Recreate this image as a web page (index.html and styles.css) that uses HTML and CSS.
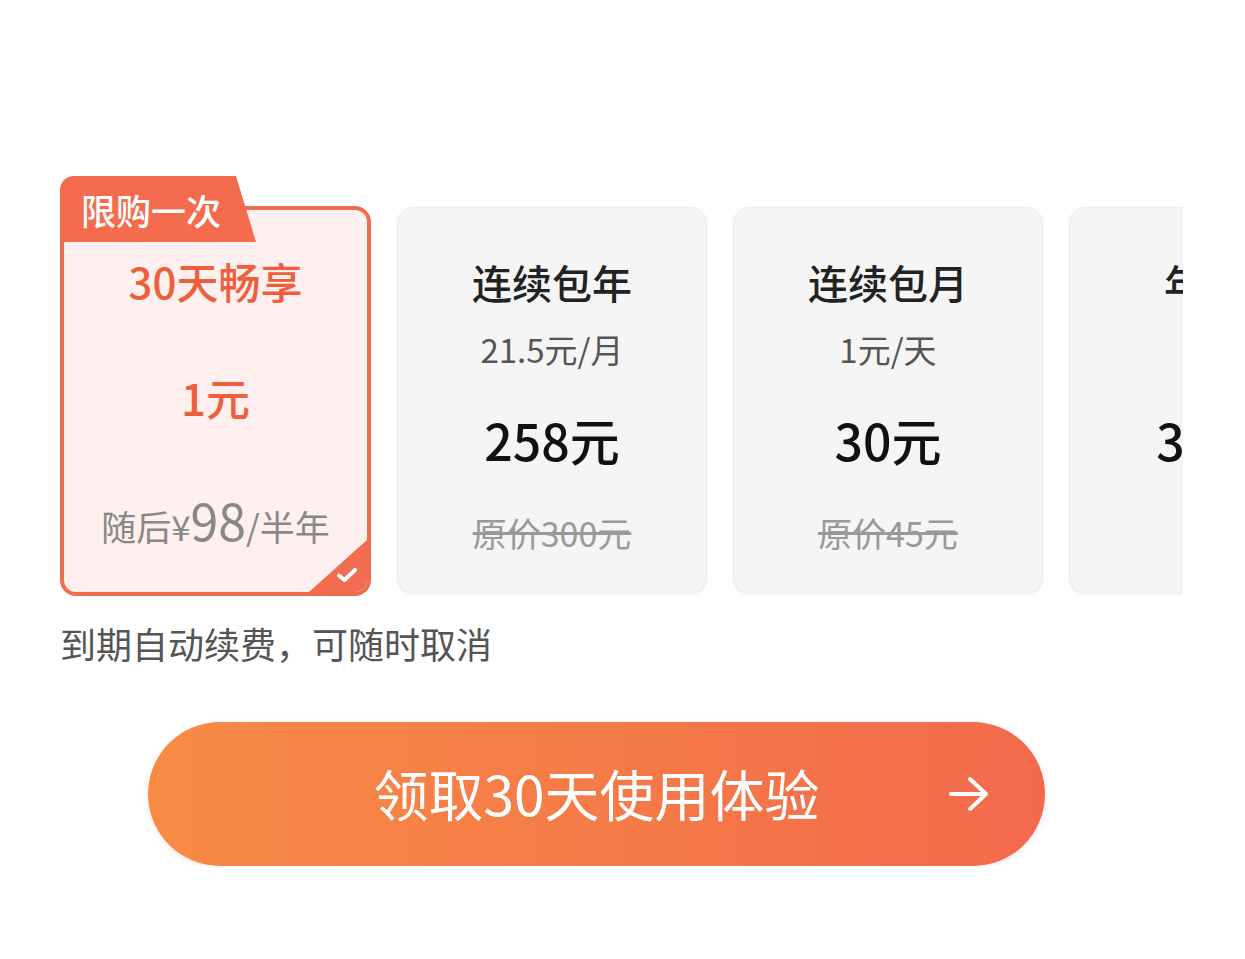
FILE: index.html
```html
<!DOCTYPE html>
<html lang="zh-CN">
<head>
    <meta charset="UTF-8">
    <meta name="viewport" content="width=device-width, initial-scale=1.0">
    <title>会员开通</title>
    <link rel="stylesheet" href="styles.css">
</head>
<body>
    <div class="page">
        <!-- Plan cards -->
        <div class="plans">
            <div class="card card-active">
                <div class="tag">限购一次</div>
                <div class="card-title">30天畅享</div>
                <div class="card-price-1">1元</div>
                <div class="card-after">随后¥<span class="after-num">98</span>/半年</div>
                <div class="corner">
                    <svg width="22" height="16" viewBox="0 0 22 16">
                        <path d="M3 8.5 L8.5 13 L19 3" fill="none" stroke="#fff" stroke-width="4" stroke-linecap="round" stroke-linejoin="round"/>
                    </svg>
                </div>
            </div>

            <div class="card">
                <div class="card-title">连续包年</div>
                <div class="card-sub">21.5元/月</div>
                <div class="card-price">258元</div>
                <div class="card-orig">原价300元</div>
            </div>

            <div class="card">
                <div class="card-title">连续包月</div>
                <div class="card-sub">1元/天</div>
                <div class="card-price">30元</div>
                <div class="card-orig">原价45元</div>
            </div>

            <div class="card">
                <div class="card-title">年度卡</div>
                <div class="card-sub">&nbsp;</div>
                <div class="card-price">348元</div>
                <div class="card-orig">&nbsp;</div>
            </div>
        </div>

        <div class="note">到期自动续费，可随时取消</div>

        <!-- Main action -->
        <button class="cta">
            <span class="cta-text">领取30天使用体验</span>
            <svg class="cta-arrow" width="44" height="40" viewBox="0 0 44 40">
                <path d="M4 20 H39 M23 5 L39 20 L23 35" fill="none" stroke="#fff" stroke-width="4" stroke-linecap="round" stroke-linejoin="round"/>
            </svg>
        </button>
    </div>
</body>
</html>
```

FILE: styles.css
```css
body {
    margin: 0;
    background-color: #fff;
    font-family: "Noto Sans CJK SC", "Noto Sans", sans-serif;
}

.page {
    padding-top: 176px;
    padding-left: 60px;
}

/* Plan cards row */
.plans {
    width: 1123px;
    padding-top: 30px;
    display: flex;
    align-items: flex-start;
    gap: 26px;
    overflow: hidden;
}

.card {
    position: relative;
    flex: none;
    box-sizing: border-box;
    width: 310px;
    height: 387px;
    margin-top: 1px;
    padding-top: 52px;
    background-color: #f5f5f5;
    border: 1px solid #ececec;
    border-radius: 16px;
    box-shadow: 0 1px 4px rgba(0, 0, 0, 0.04);
    text-align: center;
}

.card-active {
    width: 311px;
    height: 390px;
    margin-top: 0;
    padding-top: 49px;
    background-color: #fdf0ee;
    border: 4px solid #f26c4f;
    box-shadow: none;
}

.tag {
    position: absolute;
    top: -34px;
    left: -4px;
    width: 194px;
    height: 66px;
    padding-left: 21px;
    padding-right: 8px;
    background-color: #f46b4e;
    border-radius: 14px 8px 6px 0;
    clip-path: polygon(0 0, 176px 0, 196px 66px, 0 66px);
    color: #fff;
    font-size: 35px;
    font-weight: 500;
    line-height: 68px;
    text-align: left;
}

.card-title {
    font-size: 40px;
    font-weight: 500;
    line-height: 44px;
    color: #222;
}

.card-active .card-title {
    font-size: 42px;
    color: #ee5f3f;
}

.card-sub {
    margin-top: 25px;
    font-size: 33px;
    line-height: 40px;
    color: #555;
}

.card-price {
    margin-top: 42px;
    font-size: 50px;
    font-weight: 500;
    line-height: 56px;
    color: #111;
}

.card-orig {
    margin-top: 46px;
    font-size: 34px;
    line-height: 40px;
    color: #999;
    text-decoration: line-through;
}

.card-price-1 {
    margin-top: 66px;
    font-size: 44px;
    font-weight: 500;
    line-height: 56px;
    color: #ee5f3f;
}

.card-after {
    margin-top: 66px;
    font-size: 35px;
    line-height: 56px;
    color: #888;
}

.after-num {
    font-size: 50px;
}

.corner {
    position: absolute;
    right: 0;
    bottom: 0;
    width: 58px;
    height: 52px;
    background-color: #f26c4f;
    border-bottom-right-radius: 12px;
    clip-path: polygon(100% 0, 100% 100%, 0 100%);
}

.corner svg {
    position: absolute;
    right: 9px;
    bottom: 9px;
}

.note {
    margin-top: 25px;
    font-size: 36px;
    line-height: 44px;
    color: #555;
}

/* Call to action */
.cta {
    position: relative;
    display: block;
    width: 897px;
    height: 144px;
    margin-top: 57px;
    margin-left: 88px;
    padding: 0;
    border: none;
    border-radius: 72px;
    background: linear-gradient(90deg, #f78b44 0%, #f57b48 50%, #f3694c 100%);
    box-shadow: 0 2px 6px rgba(243, 105, 76, 0.15);
    color: #fff;
    font-family: "Noto Sans CJK SC", "Noto Sans", sans-serif;
    cursor: pointer;
}

.cta-text {
    display: block;
    margin-top: -5px;
    font-size: 55px;
    line-height: 144px;
}

.cta-arrow {
    position: absolute;
    right: 54px;
    top: 52px;
}
```
